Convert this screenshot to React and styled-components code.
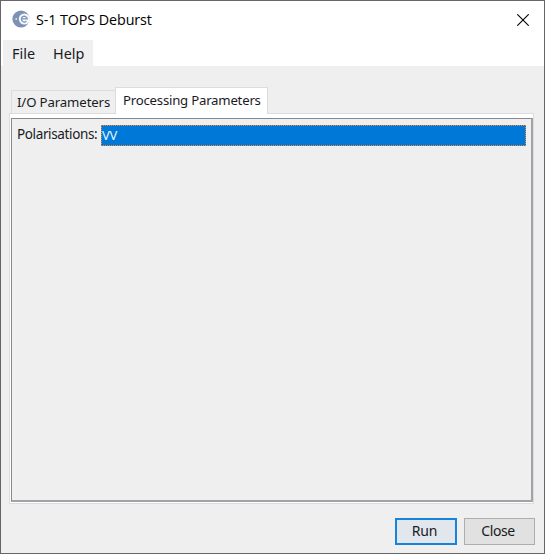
import React from 'react';
import styled, { createGlobalStyle } from 'styled-components';

const GlobalStyle = createGlobalStyle`
  * { box-sizing: border-box; }
  body { margin: 0; background: #efefef; }
`;

const Window = styled.div`
  display: flex;
  flex-direction: column;
  width: 545px;
  height: 554px;
  border: 1px solid #666668;
  background: #efefef;
  color: #1a1a1f;
  font-family: 'Noto Sans', 'Open Sans', sans-serif;
  font-size: 14px;
  white-space: nowrap;
  overflow: hidden;
`;

const TitleBar = styled.header`
  display: flex;
  align-items: center;
  height: 39px;
  padding: 0 15px 0 11px;
  background: #fff;
  color: #000;
`;

const Logo = styled.svg`
  flex: none;
  width: 18px;
  height: 18px;
  margin: 0 6px 3px 0;
`;

const Title = styled.h1`
  flex: 1;
  margin: 0;
  padding-bottom: 1px;
  font-family: 'Open Sans', sans-serif;
  font-size: 14.3px;
  font-weight: 400;
  line-height: 20px;
  letter-spacing: -0.08px;
`;

const CloseIcon = styled.svg`
  width: 12px;
  height: 12px;
  margin-bottom: 1px;
`;

const MenuStrip = styled.nav`
  display: flex;
  height: 26px;
  padding-left: 2px;
  background: #fff;
`;

const MenuItem = styled.span`
  width: ${({ $width }) => $width}px;
  padding-left: 9px;
  background: #efefef;
  font-size: 14.4px;
  line-height: 27px;
`;

const Content = styled.main`
  padding: 21px 10px 0 8px;
`;

const TabList = styled.div`
  display: flex;
  align-items: flex-end;
  height: 26px;
  padding-left: 2px;
`;

const Tab = styled.div`
  position: relative;
  width: ${({ $active }) => ($active ? 153 : 104)}px;
  height: ${({ $active }) => ($active ? 27 : 23)}px;
  margin-bottom: ${({ $active }) => ($active ? -1 : 0)}px;
  padding-left: ${({ $active }) => ($active ? 7 : 5)}px;
  border: 1px solid #dcdcdc;
  border-bottom: 0;
  border-right-width: ${({ $active }) => ($active ? 1 : 0)}px;
  background: ${({ $active }) => ($active ? '#fff' : '#efefef')};
  font-size: 13.2px;
  line-height: ${({ $active }) => ($active ? 24 : 23)}px;
  letter-spacing: ${({ $spacing }) => $spacing}px;
`;

const TabPane = styled.section`
  height: 391px;
  padding: 4px 0 1px 1px;
  border: 1px solid #dcdcdc;
  background: #fff;
`;

const Parameters = styled.div`
  display: flex;
  align-items: flex-start;
  height: 384px;
  padding: 6px 5px 5px 5px;
  border: 2px solid;
  border-color: #858a91 #a0a4a9 #a0a4a9 #858a91;
  border-left-width: 1px;
  border-top-width: 1px;
  background: #efefef;
`;

const Label = styled.label`
  flex: 0 0 84px;
  font-size: 13.5px;
  line-height: 19px;
  letter-spacing: -0.37px;
`;

const ListItem = styled.div`
  flex: 1;
  height: 21px;
  border: 1px dotted #ff8728;
  background: #0078d7;
  color: #e5f4ff;
  font-size: 13px;
  line-height: 18px;
  letter-spacing: -0.4px;
`;

const ButtonRow = styled.footer`
  display: flex;
  justify-content: flex-end;
  gap: 7px;
  padding: 14px 9px 0 0;
`;

const Button = styled.button`
  width: ${({ $primary }) => ($primary ? 62 : 71)}px;
  height: 27px;
  padding: 0 3px 2px 0;
  border: ${({ $primary }) => ($primary ? '2px solid #1683dc' : '1px solid #adadad')};
  background: ${({ $primary }) => ($primary ? '#e2e6ed' : '#e1e1e1')};
  color: inherit;
  font: 14px/20px 'Noto Sans', sans-serif;
  letter-spacing: ${({ $primary }) => ($primary ? -0.1 : -0.4)}px;
`;

export default function App() {
  return (
    <Window>
      <GlobalStyle />
      <TitleBar>
        <Logo viewBox="0 0 18 18" aria-hidden="true">
          <circle cx="9" cy="9" r="8.6" fill="#7c92b5" />
          <circle cx="12.4" cy="9" r="5.6" fill="#f7f9fc" />
          <path
            d="M9.6 8.8H15.2A2.9 2.9 0 1 0 14.4 11.2"
            fill="none"
            stroke="#7c92b5"
            strokeWidth="1.3"
          />
          <circle cx="4.2" cy="9" r="0.9" fill="#e2e8f1" />
        </Logo>
        <Title>S-1 TOPS Deburst</Title>
        <CloseIcon viewBox="0 0 12 12" aria-label="Close">
          <path d="M.3.3 11.7 11.7M11.7.3.3 11.7" fill="none" stroke="#000" strokeWidth="1.1" />
        </CloseIcon>
      </TitleBar>
      <MenuStrip>
        <MenuItem $width={41}>File</MenuItem>
        <MenuItem $width={49}>Help</MenuItem>
      </MenuStrip>
      <Content>
        <TabList>
          <Tab $spacing={-0.12}>I/O Parameters</Tab>
          <Tab $active $spacing={-0.22}>Processing Parameters</Tab>
        </TabList>
        <TabPane>
          <Parameters>
            <Label>Polarisations:</Label>
            <ListItem>VV</ListItem>
          </Parameters>
        </TabPane>
      </Content>
      <ButtonRow>
        <Button $primary>Run</Button>
        <Button>Close</Button>
      </ButtonRow>
    </Window>
  );
}
